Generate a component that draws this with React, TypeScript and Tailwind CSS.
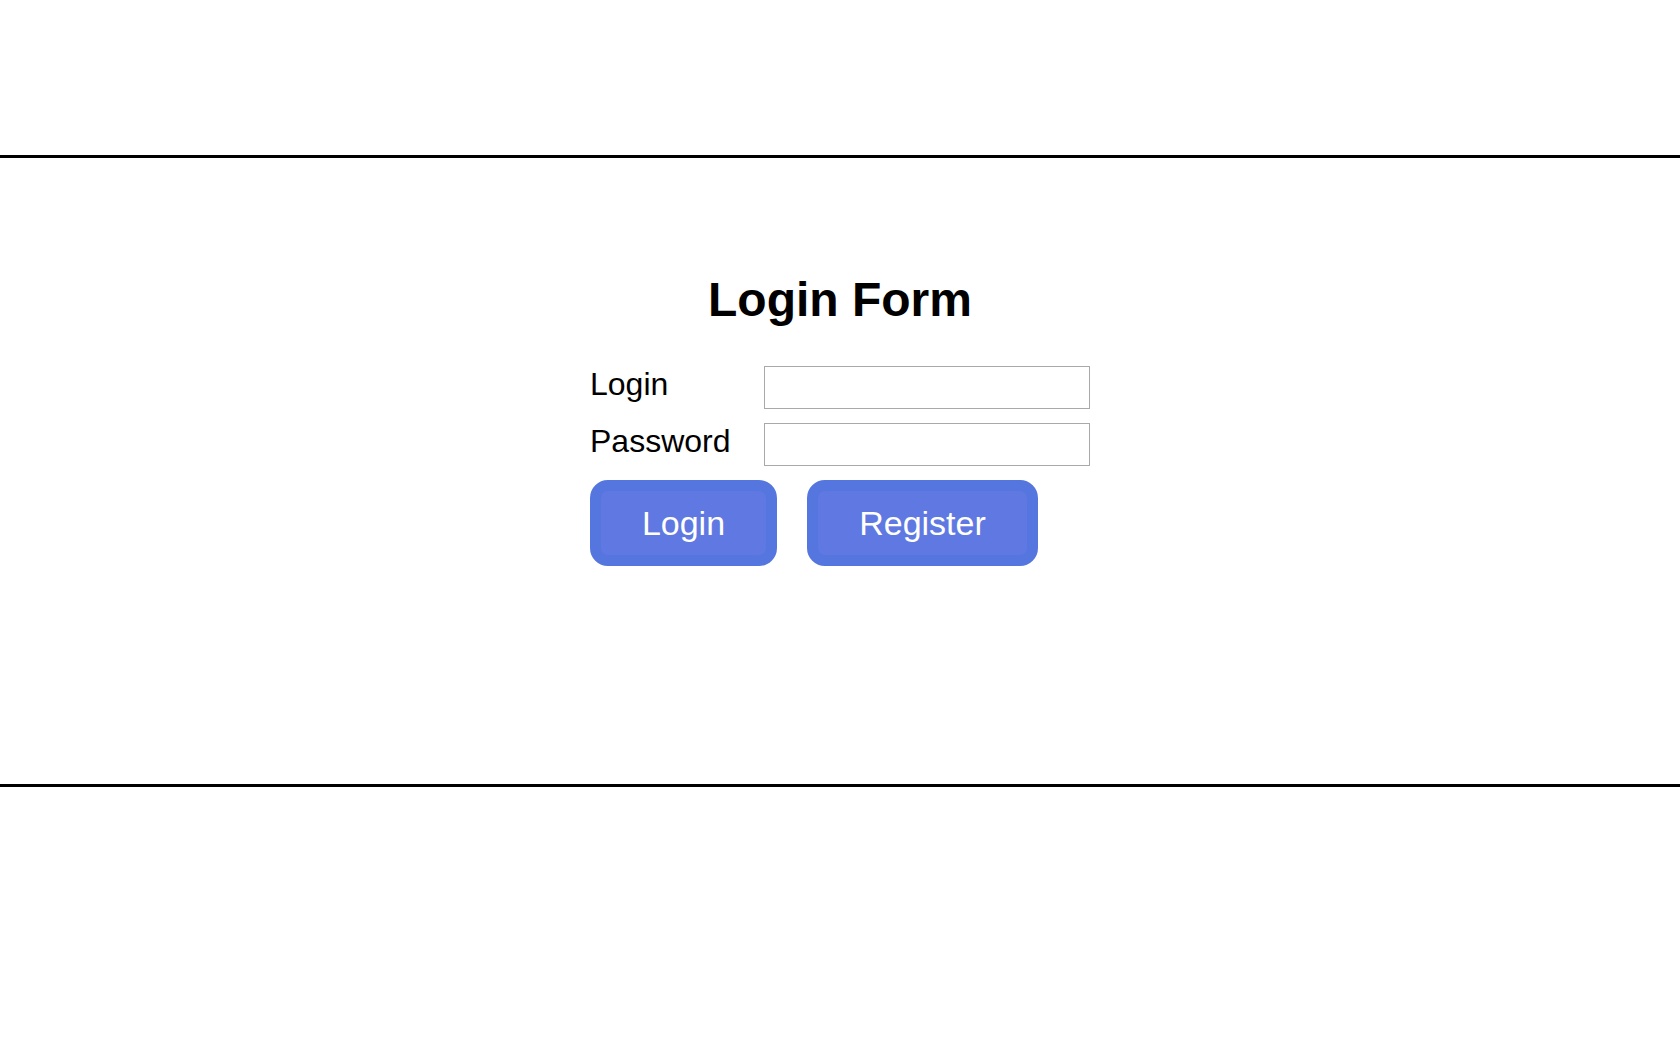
import React from "react";

export default function App() {
  return (
    <div className="min-h-[1050px] bg-white text-black" style={{ fontFamily: '"Liberation Sans", Arial, sans-serif' }}>
      <div className="h-[158px] border-b-[3px] border-black" />
      <main className="h-[626px] flex flex-col items-center pt-[114px]">
        <h1 className="text-[48px] font-bold leading-[55px] m-0">Login Form</h1>
        <div className="mt-[39px] w-[500px] flex flex-col gap-[14px]">
          <div className="flex items-start">
            <label className="w-[174px] text-[32px] leading-[30px] pt-[3px]">Login</label>
            <input type="text" className="w-[326px] h-[43px] border border-[#a9a9a9] bg-white outline-none" />
          </div>
          <div className="flex items-start">
            <label className="w-[174px] text-[32px] leading-[30px] pt-[3px]">Password</label>
            <input type="password" className="w-[326px] h-[43px] border border-[#a9a9a9] bg-white outline-none" />
          </div>
          <div className="flex gap-[30px]">
            <button className="w-[187px] h-[86px] rounded-[18px] border-[11px] border-[#5576de] bg-[#5f78e2] text-white text-[34px] leading-none flex items-center justify-center">
              Login
            </button>
            <button className="w-[231px] h-[86px] rounded-[18px] border-[11px] border-[#5576de] bg-[#5f78e2] text-white text-[34px] leading-none flex items-center justify-center">
              Register
            </button>
          </div>
        </div>
      </main>
      <div className="border-t-[3px] border-black" />
    </div>
  );
}
